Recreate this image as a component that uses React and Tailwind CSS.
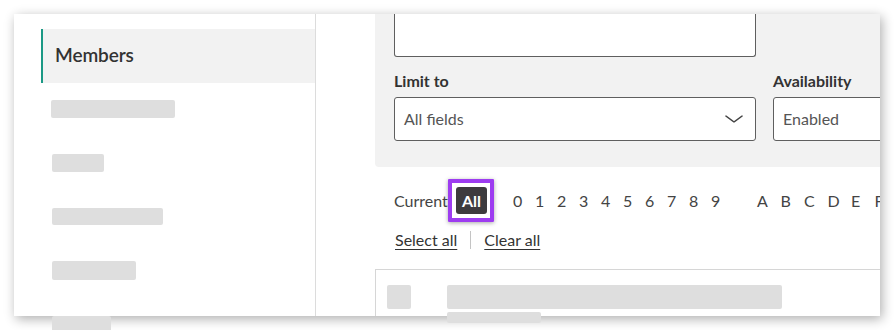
import { ChevronDown } from "lucide-react";

const digits = ["0", "1", "2", "3", "4", "5", "6", "7", "8", "9"];
const letters = ["A", "B", "C", "D", "E", "F"];

function Skeleton({ className }) {
  return <div className={`shrink-0 bg-[#dedede] rounded-[2px] ${className}`} />;
}

export default function App() {
  return (
    <div className="h-[330px] w-[894px] overflow-hidden bg-white pt-[14px] pl-[14px] font-['Lato',sans-serif] text-[#333]">
      {/* Framed window */}
      <div className="flex h-[302px] w-[866px] overflow-x-clip bg-white shadow-[2px_3px_11px_rgba(0,0,0,0.32)]">
        {/* Sidebar */}
        <aside className="h-[302px] w-[302px] shrink-0 border-r border-[#dcdcdc] pt-[15px]">
          <div className="ml-[27px] flex h-[54px] items-center border-l-2 border-[#1b9985] bg-[#f2f2f2] pb-[2px] pl-[12px]">
            <span className="text-[19px] font-semibold tracking-[-0.1px] text-[#333]">
              Members
            </span>
          </div>
          <div className="mt-[17px] flex flex-col gap-[36px] pl-[37px]">
            <Skeleton className="h-[18px] w-[124px]" />
            <Skeleton className="ml-px h-[18px] w-[52px]" />
            <Skeleton className="ml-px h-[17px] w-[111px]" />
            <Skeleton className="ml-px h-[19px] w-[84px]" />
            <Skeleton className="ml-px h-[18px] w-[59px]" />
          </div>
        </aside>

        {/* Main pane */}
        <section className="min-w-0 flex-1 pl-[59px]">
          {/* Filters */}
          <div className="h-[153px] w-[600px] rounded-bl-[4px] bg-[#f2f2f2] pl-[19px]">
            <div className="h-[43px] w-[362px] rounded-b-[3px] border-x border-b border-[#5f5f5f] bg-white" />
            <div className="mt-[14px] flex gap-[17px]">
              <div className="shrink-0">
                <div className="text-[16px] font-bold leading-[20px] text-[#333]">
                  Limit to
                </div>
                <div className="mt-[6px] flex h-[44px] w-[362px] items-center justify-between rounded-[3px] border border-[#5f5f5f] bg-white pl-[9px] pr-[9px]">
                  <span className="text-[16px] text-[#555]">All fields</span>
                  <ChevronDown
                    size={24}
                    strokeWidth={1.1}
                    className="scale-x-[1.35] text-[#444]"
                  />
                </div>
              </div>
              <div className="shrink-0">
                <div className="text-[16px] font-bold leading-[20px] text-[#333]">
                  Availability
                </div>
                <div className="mt-[6px] flex h-[44px] w-[200px] items-center rounded-[3px] border border-[#5f5f5f] bg-white pl-[9px]">
                  <span className="text-[16px] text-[#555]">Enabled</span>
                </div>
              </div>
            </div>
          </div>

          {/* Alphabet index */}
          <div className="mt-[20px] flex h-[27px] w-[600px] items-center whitespace-nowrap pl-[19px] text-[16px] text-[#444]">
            <span className="w-[62px] shrink-0">Current</span>
            <span className="relative flex h-[27px] w-[31px] shrink-0 items-center justify-center rounded-[3px] bg-[#3d3b3e] font-bold text-white">
              All
              <span className="absolute -top-[8px] -bottom-[8px] -left-[8px] -right-[7px] rounded-[1px] border-4 border-[#9d3cf0] shadow-[0_1px_4px_rgba(0,0,0,0.35)]" />
            </span>
            <div className="ml-[26px] flex shrink-0">
              {digits.map((d) => (
                <span key={d} className="w-[22px] shrink-0">
                  {d}
                </span>
              ))}
            </div>
            <div className="ml-[24px] flex shrink-0">
              {letters.map((l) => (
                <span key={l} className="w-[23.5px] shrink-0">
                  {l}
                </span>
              ))}
            </div>
          </div>

          <div className="mt-[16px] flex items-center whitespace-nowrap pl-[20px] text-[16px] leading-[20px] text-[#333]">
            <span className="underline underline-offset-[3px]">Select all</span>
            <span className="mx-[13px] h-[18px] w-px bg-[#c4c4c4]" />
            <span className="underline underline-offset-[3px]">Clear all</span>
          </div>

          {/* Results list */}
          <div className="mt-[19px] h-[47px] w-[600px] border-l border-t border-[#d6d6d6] pt-[15px]">
            <div className="flex">
              <Skeleton className="ml-[11px] h-[24px] w-[24px]" />
              <div className="ml-[36px]">
                <Skeleton className="h-[24px] w-[335px]" />
                <Skeleton className="mt-[3px] h-[11px] w-[94px]" />
              </div>
            </div>
          </div>
        </section>
      </div>
    </div>
  );
}
